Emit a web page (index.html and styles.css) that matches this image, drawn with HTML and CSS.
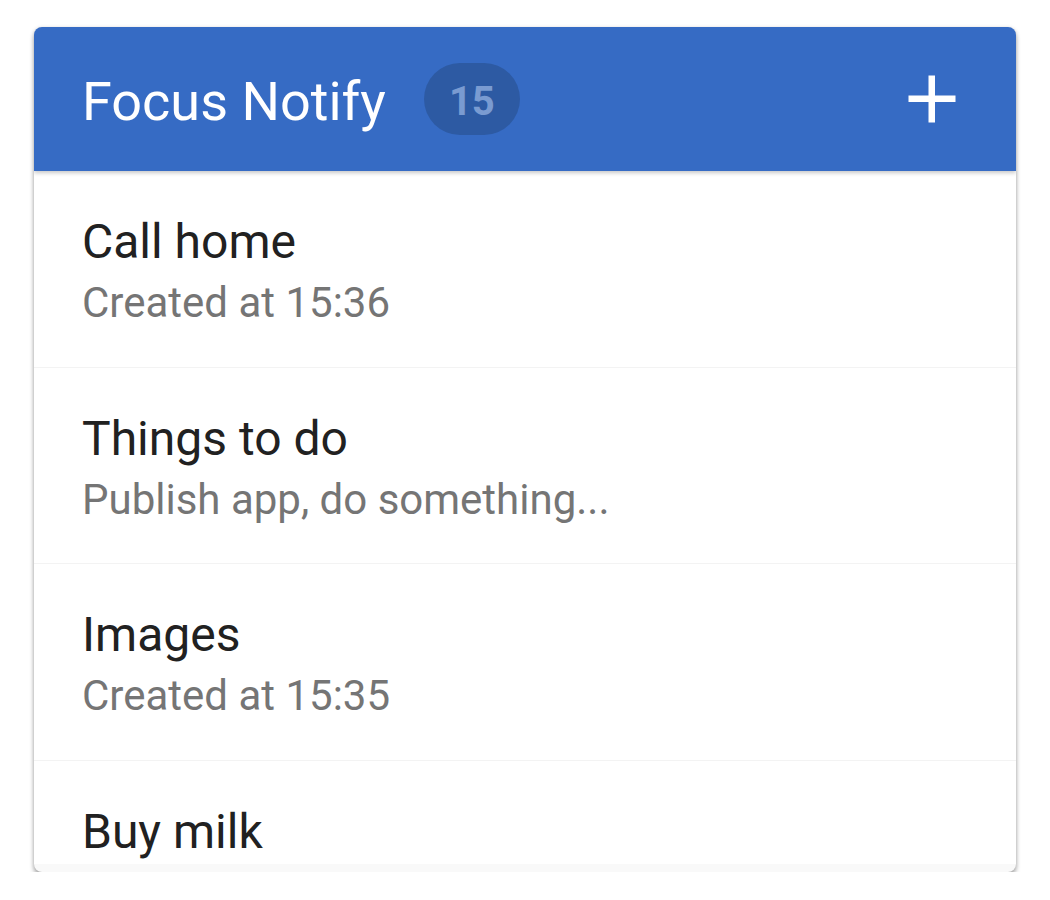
FILE: index.html
```html
<!DOCTYPE html>
<html>
<head>
<meta charset="utf-8">
<link rel="stylesheet" href="styles.css">
</head>
<body>
<div class="page">
  <div class="card">
    <div class="header">
      <span class="app-title">Focus Notify</span>
      <span class="badge">15</span>
      <button class="add" aria-label="Add">
        <svg width="48" height="48" viewBox="0 0 48 48"><rect x="0.5" y="20.5" width="47" height="6.5" fill="#fff"/><rect x="20.5" y="0.5" width="6.5" height="47" fill="#fff"/></svg>
      </button>
    </div>
    <div class="list">
      <div class="item"><div class="item-title">Call home</div><div class="item-sub">Created at 15:36</div></div>
      <div class="item"><div class="item-title">Things to do</div><div class="item-sub">Publish app, do something...</div></div>
      <div class="item"><div class="item-title">Images</div><div class="item-sub">Created at 15:35</div></div>
      <div class="item"><div class="item-title">Buy milk</div></div>
    </div>
  </div>
</div>
</body>
</html>
```
FILE: styles.css
```css
html, body { margin: 0; padding: 0; background: #fff; }
body { font-family: Roboto, "Noto Sans", sans-serif; }
.page { padding: 27px 34px 0 34px; }
.card {
  height: 845px;
  border-radius: 8px;
  background: #f9f9f9;
  box-shadow: 0 4px 5px rgba(0,0,0,0.28), 0 1px 4px rgba(0,0,0,0.18);
  overflow: hidden;
  display: flex;
  flex-direction: column;
}
.header {
  flex: 0 0 144px;
  background: #366bc4;
  display: flex;
  align-items: center;
  padding: 0 60px 0 48px;
  box-shadow: 0 2px 4px rgba(0,0,0,0.22);
  position: relative;
  z-index: 1;
}
.app-title { color: #fff; font-size: 54px; line-height: 64px; padding-top: 5px; }
.badge {
  margin-left: 38px;
  width: 96px;
  height: 72px;
  box-sizing: border-box;
  padding-top: 4px;
  border-radius: 36px;
  background: #2d5aa3;
  color: #7a9bd1;
  font-weight: 700;
  font-size: 40px;
  display: flex;
  align-items: center;
  justify-content: center;
}
.add {
  margin-left: auto;
  border: 0;
  padding: 0;
  background: none;
  display: flex;
}
.list {
  flex: 1;
  margin-bottom: 8px;
  background: #fff;
  overflow: hidden;
}
.item {
  height: 196.5px;
  box-sizing: border-box;
  padding: 43px 0 0 48px;
  border-bottom: 1px solid #f3f3f3;
}
.item-title { font-size: 48px; line-height: 56px; color: #212121; }
.item-sub { font-size: 42px; line-height: 50px; margin-top: 8px; color: #757575; }
```
